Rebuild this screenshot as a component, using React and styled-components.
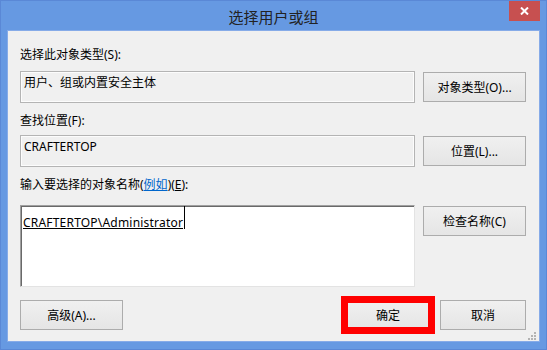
import React from 'react';
import styled, { createGlobalStyle } from 'styled-components';

const Global = createGlobalStyle`
  html, body { margin: 0; padding: 0; background: #6699e2; }
  body {
    font-family: "Noto Sans", "Noto Sans CJK SC", sans-serif;
    font-size: 12px;
    color: #000;
  }
  * { box-sizing: border-box; }
`;

const Window = styled.div`
  width: 547px;
  height: 350px;
  background: #6699e2;
  border: 1px solid #5a88d6;
  display: flex;
  flex-direction: column;
`;

const TitleBar = styled.div`
  height: 29px;
  display: grid;
  grid-template-columns: 1fr auto 1fr;
  align-items: start;
`;

const Title = styled.div`
  grid-column: 2;
  font-family: "Noto Sans CJK SC", sans-serif;
  font-size: 15px;
  line-height: 20px;
  padding-top: 6px;
  color: #222;
`;

const CloseButton = styled.div`
  grid-column: 3;
  justify-self: end;
  margin-right: 6px;
  width: 31px;
  height: 20px;
  background: #c75050;
  display: flex;
  align-items: center;
  justify-content: center;
`;

const Panel = styled.div`
  flex: 1;
  margin: 0 6px 7px;
  background: #f0f0f0;
  border: 1px solid #86abe8;
  padding: 16px 13px 0 12px;
  position: relative;
  display: flex;
  flex-direction: column;
`;

const Label = styled.div`
  height: 16px;
  line-height: 16px;
  margin-top: ${(p) => p.$top || 0}px;
  white-space: nowrap;
`;

const Row = styled.div`
  display: grid;
  grid-template-columns: 395px 103px;
  column-gap: 8px;
  align-items: ${(p) => (p.$start ? 'start' : 'center')};
  margin-top: ${(p) => p.$top || 0}px;
`;

const ReadBox = styled.div`
  height: 32px;
  border: 1px solid #b4b4b4;
  box-shadow: inset 0 0 0 1px #fcfcfc;
  background: #f0f0f0;
  padding: 3px 0 0 3px;
  line-height: 16px;
  white-space: nowrap;
`;

const NameBox = styled.div`
  height: 82px;
  background: #fff;
  border-top: 1px solid #a0a0a0;
  border-left: 1px solid #a0a0a0;
  border-right: 1px solid #e3e3e3;
  border-bottom: 1px solid #e3e3e3;
  box-shadow: inset 1px 1px 0 #696969, inset -1px -1px 0 #fff;
  padding: 9px 0 0 2px;
  line-height: 16px;
  white-space: nowrap;
`;

const NameText = styled.span`
  position: relative;
  letter-spacing: 0.2px;
  text-decoration: underline;
  text-underline-offset: 1px;
  &::after {
    content: '';
    position: absolute;
    right: -2px;
    top: -8px;
    width: 1px;
    height: 23px;
    background: #000;
  }
`;

const Button = styled.div`
  width: ${(p) => p.$w || 103}px;
  height: 30px;
  border: 1px solid #acacac;
  background: linear-gradient(#f0f0f0, #e5e5e5);
  display: flex;
  align-items: center;
  justify-content: center;
  white-space: nowrap;
  margin-top: ${(p) => p.$top || 0}px;
`;

const Highlight = styled.div`
  position: relative;
  &::after {
    content: '';
    position: absolute;
    inset: -4px;
    border: 7px solid #ff0000;
    pointer-events: none;
  }
`;

const Footer = styled.div`
  display: flex;
  justify-content: space-between;
  margin-top: 13px;
`;

const ButtonGroup = styled.div`
  display: flex;
  gap: 9px;
`;

const Link = styled.span`
  color: #0066cc;
  text-decoration: underline;
`;

const Key = styled.span`
  text-decoration: underline;
`;

const Grip = styled.svg`
  position: absolute;
  right: 3px;
  bottom: 1px;
`;

export default function App() {
  return (
    <>
      <Global />
      <Window>
        <TitleBar>
          <Title>选择用户或组</Title>
          <CloseButton>
            <svg width="9" height="8" viewBox="0 0 9 8">
              <path d="M1 0.5 L8 7.5 M8 0.5 L1 7.5" stroke="#fff" strokeWidth="2" fill="none" />
            </svg>
          </CloseButton>
        </TitleBar>
        <Panel>
          <Label>选择此对象类型(S):</Label>
          <Row $top={8}>
            <ReadBox>用户、组或内置安全主体</ReadBox>
            <Button>对象类型(O)...</Button>
          </Row>
          <Label $top={10}>查找位置(F):</Label>
          <Row $top={6}>
            <ReadBox>CRAFTERTOP</ReadBox>
            <Button>位置(L)...</Button>
          </Row>
          <Label $top={10}>
            输入要选择的对象名称(<Link>例如</Link>)(<Key>E</Key>):
          </Label>
          <Row $top={12} $start>
            <NameBox>
              <NameText>CRAFTERTOP\Administrator</NameText>
            </NameBox>
            <Button $top={1}>检查名称(C)</Button>
          </Row>
          <Footer>
            <Button>高级(A)...</Button>
            <ButtonGroup>
              <Highlight>
                <Button $w={86}>确定</Button>
              </Highlight>
              <Button $w={86}>取消</Button>
            </ButtonGroup>
          </Footer>
          <Grip width="8" height="8" viewBox="0 0 8 8">
            <rect x="6" y="0" width="2" height="2" fill="#b3b3b3" />
            <rect x="3" y="3" width="2" height="2" fill="#b3b3b3" />
            <rect x="6" y="3" width="2" height="2" fill="#b3b3b3" />
            <rect x="0" y="6" width="2" height="2" fill="#b3b3b3" />
            <rect x="3" y="6" width="2" height="2" fill="#b3b3b3" />
            <rect x="6" y="6" width="2" height="2" fill="#b3b3b3" />
          </Grip>
        </Panel>
      </Window>
    </>
  );
}
